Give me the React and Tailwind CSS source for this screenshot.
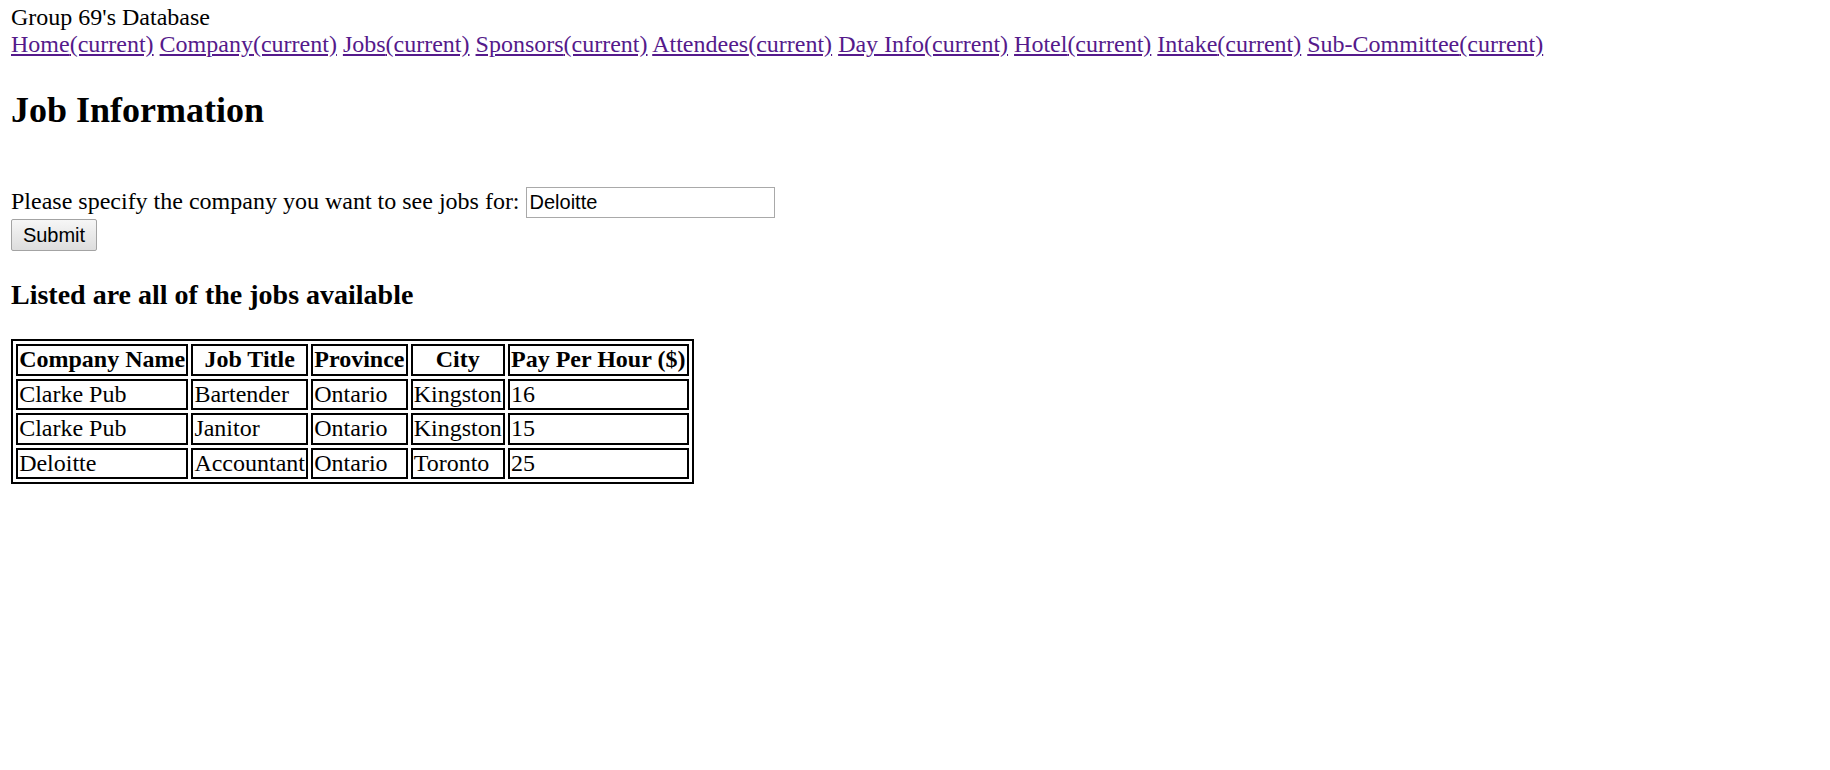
import React from "react";

const links = ["Home", "Company", "Jobs", "Sponsors", "Attendees", "Day Info", "Hotel", "Intake", "Sub-Committee"];

const rows = [
  ["Clarke Pub", "Bartender", "Ontario", "Kingston", "16"],
  ["Clarke Pub", "Janitor", "Ontario", "Kingston", "15"],
  ["Deloitte", "Accountant", "Ontario", "Toronto", "25"],
];

const headers = ["Company Name", "Job Title", "Province", "City", "Pay Per Hour ($)"];

export default function App() {
  return (
    <div className="min-h-[770px] bg-white pl-[11px] pt-[5px] text-black font-['Liberation_Serif','Times_New_Roman',serif] text-[24px] leading-[24px]">
      <div>
        <div>Group 69's Database</div>
        <div className="mt-[3px]">
          {links.map((l, i) => (
            <React.Fragment key={l}>
              <a href="#" className="text-[#551a8b] underline">
                {l}(current)
              </a>
              {i < links.length - 1 ? " " : ""}
            </React.Fragment>
          ))}
        </div>
      </div>

      <h2 className="mt-[36px] text-[36px] leading-[36px] font-bold">Job Information</h2>

      <div className="mt-[59px] flex items-baseline">
        <span className="whitespace-pre">Please specify the company you want to see jobs for: </span>
        <input
          type="text"
          defaultValue="Deloitte"
          className="h-[31px] w-[249px] border border-[#a9a9a9] bg-white pl-[3px] pr-[3px] font-['Liberation_Sans',Arial,sans-serif] text-[20px] leading-[23px] text-black outline-none"
        />
      </div>
      <div className="mt-px flex">
        <button
          type="button"
          className="block h-[32px] w-[86px] rounded-[2px] border border-[#a3a3a3] bg-gradient-to-b from-[#f6f6f6] to-[#dddddd] font-['Liberation_Sans',Arial,sans-serif] text-[20px] leading-[23px] text-black"
        >
          Submit
        </button>
      </div>

      <h3 className="mt-[30px] text-[28px] leading-[28px] font-bold">Listed are all of the jobs available</h3>

      <table className="mt-[30px] border-separate border-spacing-[3px] border-2 border-black text-[24px]">
        <thead>
          <tr>
            {headers.map((h) => (
              <th key={h} className="h-[31.5px] border-2 border-black px-[1.125px] py-0 text-center align-middle font-bold leading-[25px] whitespace-nowrap">
                {h}
              </th>
            ))}
          </tr>
        </thead>
        <tbody>
          {rows.map((r, i) => (
            <tr key={i}>
              {r.map((c, j) => (
                <td key={j} className="h-[31.5px] border-2 border-black px-[1.125px] py-0 text-left align-middle leading-[25px] whitespace-nowrap">
                  {c}
                </td>
              ))}
            </tr>
          ))}
        </tbody>
      </table>
    </div>
  );
}
